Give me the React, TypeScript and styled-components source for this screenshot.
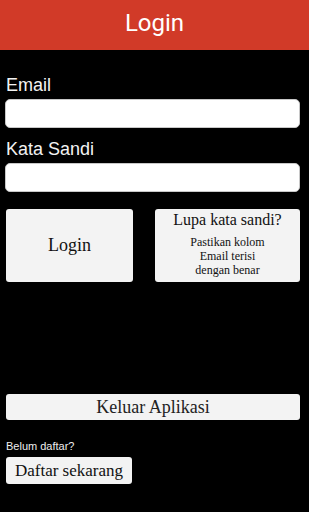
import React from "react";
import styled, { createGlobalStyle } from "styled-components";

const GlobalStyle = createGlobalStyle`
    html, body {
        margin: 0;
        padding: 0;
        background: #000;
    }
`;

export default function App() {
    return (
        <Screen>
            <GlobalStyle />
            <Header>
                <Title>Login</Title>
            </Header>
            <Body>
                <FieldLabel>Email</FieldLabel>
                <Input type="text" />
                <FieldLabel $gap={11}>Kata Sandi</FieldLabel>
                <Input type="password" />
                <ButtonRow>
                    <BigButton>Login</BigButton>
                    <HintBox>
                        <HintTitle>Lupa kata sandi?</HintTitle>
                        <HintText>
                            Pastikan kolom
                            <br />
                            Email terisi
                            <br />
                            dengan benar
                        </HintText>
                    </HintBox>
                </ButtonRow>
                <WideButton>Keluar Aplikasi</WideButton>
                <SmallNote>Belum daftar?</SmallNote>
                <RegisterButton>Daftar sekarang</RegisterButton>
            </Body>
        </Screen>
    );
}

const Screen = styled.div`
    width: 309px;
    height: 512px;
    background: #000;
    display: flex;
    flex-direction: column;
    overflow: hidden;
`;

const Header = styled.header`
    height: 50px;
    background: #d13a28;
    display: flex;
    justify-content: center;
    align-items: center;
`;

const Title = styled.h1`
    margin: 0;
    font-family: Roboto, "Noto Sans", sans-serif;
    font-weight: 400;
    font-size: 24px;
    color: #fff;
    line-height: 28px;
    margin-top: -4px;
`;

const Body = styled.main`
    display: flex;
    flex-direction: column;
    padding: 0 8px 0 6px;
`;

const FieldLabel = styled.label<{ $gap?: number }>`
    font-family: "Liberation Sans", Arial, sans-serif;
    font-size: 18px;
    line-height: 20px;
    color: #f2f2f2;
    margin-top: ${(p) => p.$gap ?? 25}px;
    margin-bottom: 4px;
`;

const Input = styled.input`
    box-sizing: border-box;
    height: 29px;
    width: 100%;
    margin: 0 0 0 -1px;
    border: 1px solid #c8c8c8;
    border-radius: 5px;
    background: #fff;
    outline: none;
`;

const ButtonRow = styled.div`
    display: flex;
    justify-content: space-between;
    margin-top: 17px;
    height: 73px;
`;

const serif = `"Liberation Serif", "DejaVu Serif", serif`;

const BigButton = styled.button`
    width: 127px;
    height: 100%;
    border: none;
    border-radius: 3px;
    background: #f3f3f3;
    font-family: ${serif};
    font-size: 18px;
    color: #111;
    padding: 0;
`;

const HintBox = styled.div`
    width: 145px;
    height: 100%;
    margin-right: 1px;
    border-radius: 3px;
    background: #f3f3f3;
    display: flex;
    flex-direction: column;
    align-items: center;
    font-family: ${serif};
    color: #111;
`;

const HintTitle = styled.div`
    font-size: 16px;
    line-height: 18px;
    margin-top: 2px;
`;

const HintText = styled.div`
    font-size: 12px;
    line-height: 14px;
    text-align: center;
    margin-top: 6px;
`;

const WideButton = styled.button`
    margin-top: 112px;
    height: 26px;
    width: 294px;
    border: none;
    border-radius: 3px;
    background: #f3f3f3;
    font-family: ${serif};
    font-size: 18px;
    color: #222;
    padding: 0;
    line-height: 26px;
`;

const SmallNote = styled.div`
    margin-top: 20px;
    font-family: "Liberation Sans", Arial, sans-serif;
    font-size: 11px;
    line-height: 13px;
    color: #eee;
`;

const RegisterButton = styled.button`
    margin-top: 4px;
    align-self: flex-start;
    width: 126px;
    height: 27px;
    border: none;
    border-radius: 3px;
    background: #f3f3f3;
    font-family: ${serif};
    font-size: 17px;
    color: #111;
    padding: 0;
`;
